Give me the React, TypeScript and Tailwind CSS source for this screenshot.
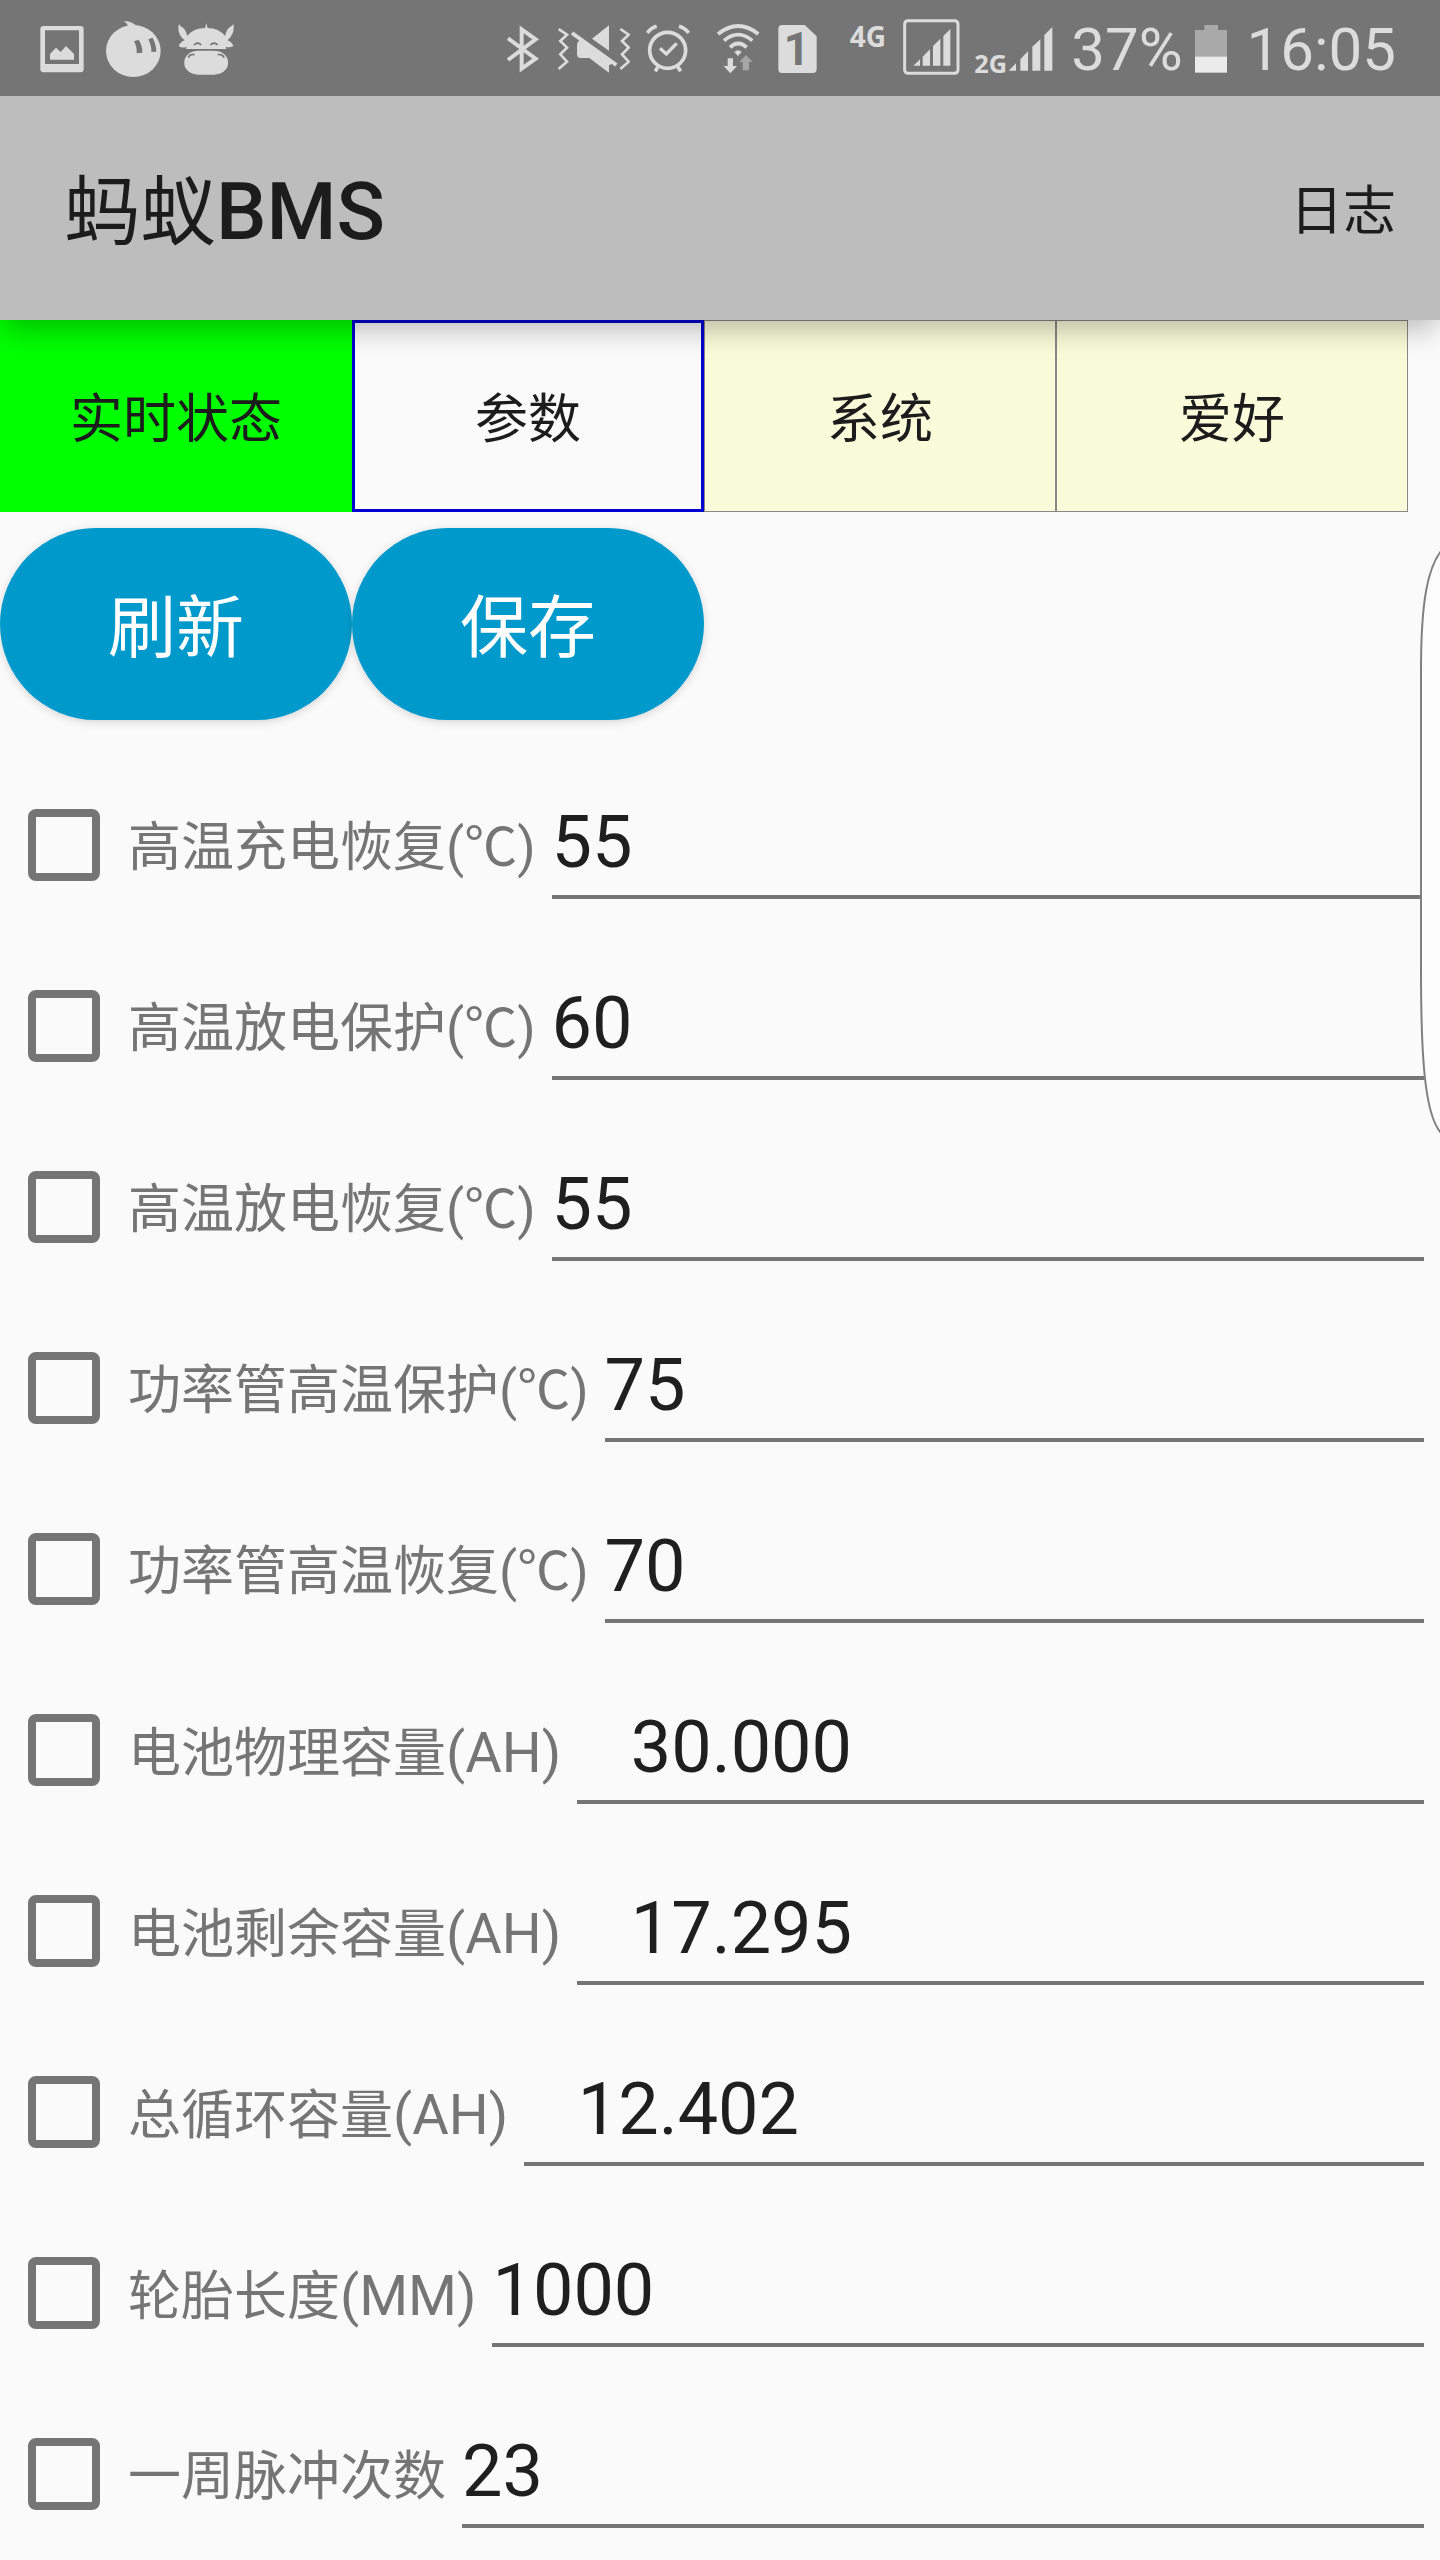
import React, { useState } from "react";

interface Param {
  id: string;
  name: string;
  unit?: string;
  value: string;
}

const PARAMS: Param[] = [
  { id: "charge-recover", name: "高温充电恢复(℃)", value: "55" },
  { id: "discharge-protect", name: "高温放电保护(℃)", value: "60" },
  { id: "discharge-recover", name: "高温放电恢复(℃)", value: "55" },
  { id: "mos-protect", name: "功率管高温保护(℃)", value: "75" },
  { id: "mos-recover", name: "功率管高温恢复(℃)", value: "70" },
  { id: "physical-capacity", name: "电池物理容量", unit: "(AH)", value: "   30.000" },
  { id: "remaining-capacity", name: "电池剩余容量", unit: "(AH)", value: "   17.295" },
  { id: "cycle-capacity", name: "总循环容量", unit: "(AH)", value: "   12.402" },
  { id: "tire-length", name: "轮胎长度", unit: "(MM)", value: "1000" },
  { id: "pulse-count", name: "一周脉冲次数", value: "23" },
];

const TABS = [
  { name: "实时状态", style: "bg-[#00ff00]" },
  { name: "参数", style: "border-[3px] border-[#0000d0] bg-[#fafafa]" },
  { name: "系统", style: "border border-[#888888] bg-[#f9fbd9]" },
  { name: "爱好", style: "border border-[#888888] bg-[#f9fbd9]" },
];

function NotificationIcons() {
  return (
    <div className="flex items-center gap-4 pl-[38px]">
      {/* Picture */}
      <svg className="h-24 w-[52px]" viewBox="114 0 156 288" fill="currentColor">
        <path
          fillRule="evenodd"
          d="M130 78H242Q251 78 251 87V208Q251 217 242 217H130Q121 217 121 208V87Q121 78 130 78ZM135 91V192H237V91Z"
        />
        <path d="M150 179V162L168 143L182 156L198 138L222 162V179Z" />
      </svg>
      {/* Round bird */}
      <svg className="h-24 w-[55px]" viewBox="318 0 165 288" fill="currentColor">
        <ellipse cx="400" cy="153" rx="82" ry="78" />
        <path d="M384 82Q384 70 371 64Q394 62 410 78Z" />
        <g fill="#757575">
          <path d="M402 124L416 119Q428 138 427 158L410 160Q411 140 402 124Z" />
          <path d="M445 118L458 113Q469 135 469 155L454 156Q455 136 445 118Z" />
        </g>
      </svg>
      {/* Cow */}
      <svg className="h-24 w-[58px]" viewBox="531 0 174 288" fill="currentColor">
        <path d="M537 72Q541 80 547 82Q557 88 562 108Q580 84 615 84L619 70L623 84Q656 84 675 108Q680 88 689 82Q697 78 700 72Q706 100 682 121Q694 124 700 138Q690 144 677 140L679 147H558L560 140Q547 146 536 138Q543 124 554 121Q529 100 537 72Z" />
        <rect x="553" y="152" width="131" height="72" rx="42" ry="34" />
        <g fill="none" stroke="#757575" strokeWidth="5">
          <path d="M582 135Q593 124 604 135" />
          <path d="M631 135Q642 124 653 135" />
          <path d="M565 173Q568 161 584 164" />
          <path d="M672 173Q668 161 653 164" />
        </g>
      </svg>
    </div>
  );
}

function SystemIcons() {
  return (
    <div className="flex items-center pr-11">
      {/* Bluetooth */}
      <svg className="h-24 w-8" viewBox="80 0 96 288" fill="none" stroke="currentColor" strokeWidth="12">
        <path d="M83 115L166 176L124 206V88L166 118L83 180" />
      </svg>
      {/* Mute with vibration */}
      <svg className="ml-[19px] h-24 w-[72px]" viewBox="234 0 216 288" fill="currentColor">
        <path d="M336 116L387 76V152Z" />
        <path d="M291 136Q291 124 302 119L400 190L387 196V218L328 174H302Q291 174 291 162Z" />
        <path d="M276 99L409 195" stroke="currentColor" strokeWidth="12" />
        <g fill="none" stroke="currentColor" strokeWidth="8">
          <path d="M236 87L261 104L241 123L261 143L241 163L261 185L236 207" />
          <path d="M421 87L446 104L426 123L446 143L426 163L446 185L421 207" />
        </g>
      </svg>
      {/* Alarm */}
      <svg className="ml-4 h-24 w-11" viewBox="497 0 132 288" fill="none" stroke="currentColor">
        <circle cx="562" cy="151" r="54" strokeWidth="11" />
        <path d="M539 145L558 162L589 130" strokeWidth="10" />
        <path d="M501 99Q511 84 529 79M625 99Q614 84 596 79M533 200L525 214M592 200L601 214" strokeWidth="11" />
      </svg>
      {/* Wifi */}
      <svg className="ml-[26px] h-24 w-11" viewBox="709 0 132 288" fill="currentColor">
        <g fill="none" stroke="currentColor" strokeWidth="11">
          <path d="M715 102Q776 54 836 102" />
          <path d="M733 122Q776 86 818 122" />
          <path d="M751 142Q776 119 801 142" />
        </g>
        <path d="M764 156Q775 145 786 156L775 168Z" />
        <path d="M744 175H760V198H772L752 220L732 198H744Z" />
        <path d="M789 211V186H779L799 165L819 186H808V211Z" fill="#a6a6a6" />
      </svg>
      {/* SIM 1 */}
      <svg className="ml-[18px] h-24 w-10" viewBox="894 0 120 288" fill="currentColor">
        <path d="M906 75H974L1010 109V207Q1010 219 998 219H906Q895 219 895 207V87Q895 75 906 75Z" />
        <text x="950" y="196" textAnchor="middle" className="fill-[#757575] text-[136px] font-bold">
          1
        </text>
      </svg>
      <svg className="ml-8 h-24 w-[38px]" viewBox="1110 0 114 288" fill="currentColor">
        <text x="1109" y="140" className="font-['Open_Sans',sans-serif] text-[84px] font-bold">
          4G
        </text>
      </svg>
      <svg className="ml-[15px] h-24 w-[57px]" viewBox="1269 0 171 288" fill="currentColor">
        <rect x="1274" y="62" width="160" height="158" rx="10" fill="none" stroke="currentColor" strokeWidth="9" />
        <path d="M1300 197L1320 178V197ZM1328 197V170L1350 148V197ZM1359 197V138L1381 116V197ZM1390 197V108L1411 87V197Z" />
      </svg>
      <svg className="ml-[14px] h-24 w-[79px]" viewBox="42 0 237 288" fill="currentColor">
        <text x="43" y="220" className="font-['Open_Sans',sans-serif] text-[76px] font-bold">
          2G
        </text>
        <path d="M146 212L168 190V212ZM181 212V178L204 154V212ZM217 212V140L241 118V212ZM253 212V105L277 81V212Z" />
      </svg>
      <span className="ml-[18px] pt-1 text-[60px] leading-none">37%</span>
      {/* Battery */}
      <svg className="ml-3 h-24 w-8" viewBox="705 0 96 288">
        <path d="M733 75H774V90H801V171H705V90H733Z" fill="#a9a9a9" />
        <path d="M705 170H801V218H705Z" fill="#ebebeb" />
      </svg>
      <span className="ml-5 pt-1 text-[60px] leading-none">16:05</span>
    </div>
  );
}

function ParamRow({ param }: { param: Param }) {
  const [checked, setChecked] = useState(false);
  const [value, setValue] = useState(param.value);

  return (
    <div className="flex items-center pt-[54px] pr-4 pb-[19px] pl-7">
      <input
        id={`${param.id}-check`}
        type="checkbox"
        checked={checked}
        onChange={(e) => setChecked(e.target.checked)}
        className="size-[72px] shrink-0 appearance-none rounded-lg border-8 border-[#757575] checked:bg-[#757575]"
      />
      <label
        htmlFor={`${param.id}-check`}
        className="mr-4 ml-7 shrink-0 pt-1.5 text-[53px] leading-[72px] whitespace-nowrap text-[#757575]"
      >
        {param.name}
        {param.unit && <span className="text-[56px]">{param.unit}</span>}
      </label>
      <input
        type="text"
        aria-label={param.name}
        value={value}
        onChange={(e) => setValue(e.target.value)}
        className="h-[108px] min-w-0 flex-1 border-b-4 border-[#757575] bg-transparent text-[72px] text-[#1f1f1f] outline-none"
      />
    </div>
  );
}

export default function App() {
  return (
    <div className="relative min-h-screen overflow-hidden bg-[#fafafa] font-['Roboto','Noto_Sans_CJK_SC',sans-serif] text-[#1c1c1c]">
      {/* Status bar */}
      <div className="relative z-20 flex h-24 items-center justify-between bg-[#757575] text-[#dcdcdc]">
        <NotificationIcons />
        <SystemIcons />
      </div>

      {/* App bar */}
      <header className="relative z-10 flex h-56 items-center justify-between bg-[#bdbdbd] pt-2 pr-11 pl-16 shadow-[0_12px_28px_-4px_rgba(0,0,0,0.28)]">
        <h1 className="text-[76px] leading-none">
          蚂蚁<span className="text-[80px] font-medium">BMS</span>
        </h1>
        <button className="text-[53px] leading-none">日志</button>
      </header>

      {/* Tabs */}
      <nav className="grid grid-cols-4 pr-8">
        {TABS.map((tab) => (
          <button key={tab.name} className={`h-48 pt-2.5 text-[53px] ${tab.style}`}>
            {tab.name}
          </button>
        ))}
      </nav>

      <main>
        <div className="mt-4 mb-[17px] grid grid-cols-4 pr-8">
          {["刷新", "保存"].map((action) => (
            <button
              key={action}
              className="h-48 rounded-full bg-[#0099cc] pt-2.5 text-[68px] text-white shadow-[0_2px_8px_rgba(0,0,0,0.15)]"
            >
              {action}
            </button>
          ))}
        </div>

        {PARAMS.map((param) => (
          <ParamRow key={param.id} param={param} />
        ))}
      </main>

      {/* Edge panel handle */}
      <svg
        className="absolute top-[550px] right-0 h-[584px] w-5"
        viewBox="0 0 20 584"
        fill="#fdfdfd"
        stroke="#808080"
        strokeWidth="2"
      >
        <path d="M21 1C8 18 1 50 1 120V420C1 510 5 565 21 583" />
      </svg>
    </div>
  );
}
